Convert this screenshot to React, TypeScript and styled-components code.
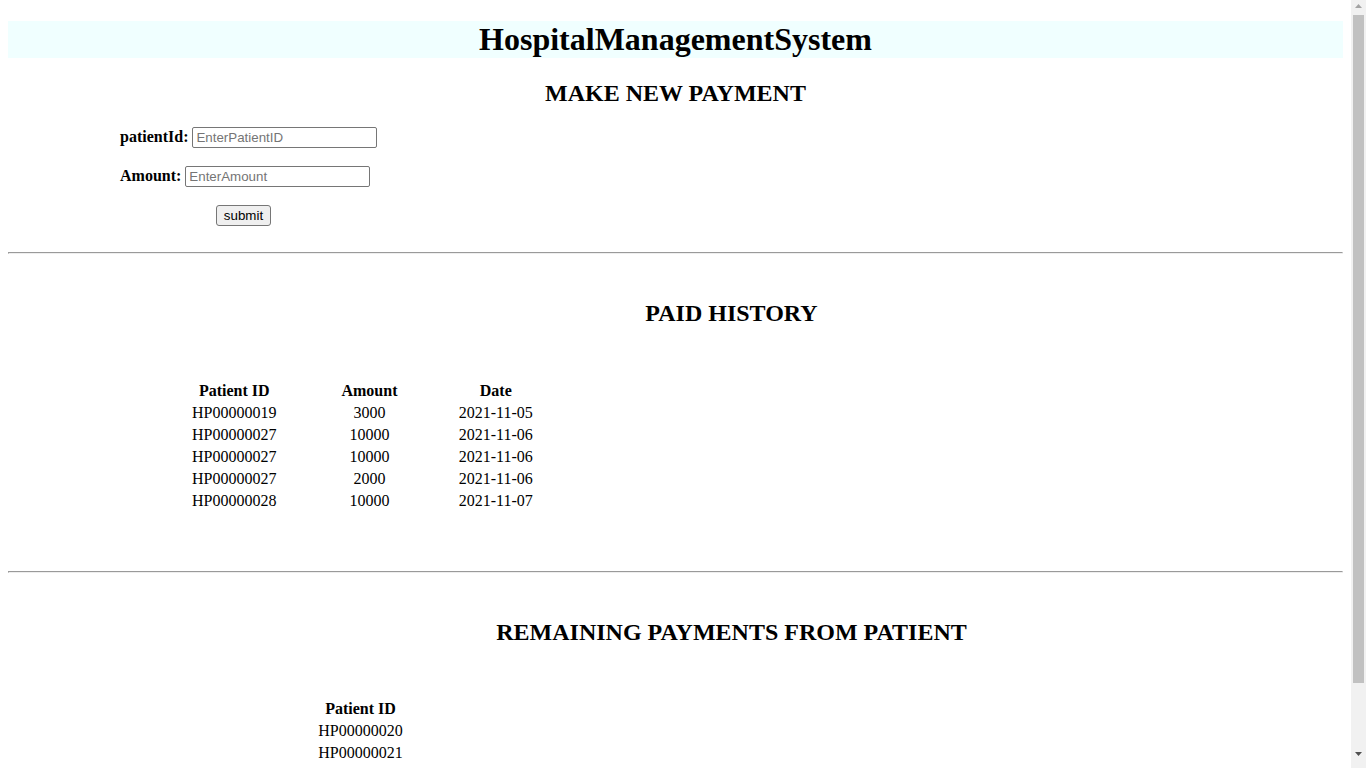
import React from "react";
import styled, { createGlobalStyle } from "styled-components";

const GlobalStyle = createGlobalStyle`
  html { background: #ffffff; }
  body {
    margin: 0 23px 8px 8px;
    font-family: "Liberation Serif", "Times New Roman", serif;
    font-size: 16px;
    color: #000000;
  }
`;

const Header = styled.h1`
  margin: 21.44px 0;
  background: #f0ffff;
  text-align: center;
  font-size: 32px;
  font-weight: bold;
`;

const Title = styled.h2`
  margin: 19.92px 0;
  text-align: center;
  font-size: 24px;
  font-weight: bold;
`;

const PaymentForm = styled.form`
  display: flex;
  flex-direction: column;
  gap: 18px;
  width: 247px;
  margin: 20px 0 26px 112px;
`;

const FieldRow = styled.div<{ $center?: boolean }>`
  display: flex;
  align-items: center;
  justify-content: ${(p) => (p.$center ? "center" : "flex-start")};
  gap: 4px;
  height: 21px;
`;

const Label = styled.label`
  font-weight: bold;
  font-size: 16px;
  white-space: nowrap;
`;

const TextInput = styled.input`
  box-sizing: border-box;
  width: 185px;
  height: 21px;
  padding: 1px 3px;
  border: 1px solid #767676;
  border-radius: 2px;
  font-family: "Liberation Sans", Arial, sans-serif;
  font-size: 13.333px;
  background: #ffffff;
  &::placeholder {
    color: #757575;
  }
`;

const SubmitButton = styled.button`
  box-sizing: border-box;
  width: 55px;
  height: 21px;
  padding: 1px 6px;
  border: 1px solid #767676;
  border-radius: 3px;
  background: #efefef;
  font-family: "Liberation Sans", Arial, sans-serif;
  font-size: 13.333px;
  color: #000000;
`;

const Divider = styled.hr`
  margin: 8px 0;
`;

const Section = styled.section`
  margin-left: 112px;
`;

const SectionTitle = styled.h2`
  margin: 46px 0 0;
  text-align: center;
  font-size: 24px;
  font-weight: bold;
`;

const DataTable = styled.table<{ $top?: number }>`
  table-layout: fixed;
  width: 416px;
  margin: ${(p) => p.$top ?? 52}px 0 58px 32.5px;
  border-spacing: 2px;
`;

const Col = styled.col<{ $w: number }>`
  width: ${(p) => p.$w}px;
`;

const HeadCell = styled.th`
  padding: 1px;
  font-weight: bold;
  text-align: center;
`;

const Cell = styled.td`
  padding: 1px;
  text-align: center;
`;

/* Classic browser scrollbar drawn over the right edge, as in the reference */
const ScrollTrack = styled.div`
  position: fixed;
  top: 0;
  right: 0;
  width: 15px;
  height: 100vh;
  background: #f1f1f1;
`;

const ScrollThumb = styled.div`
  position: absolute;
  top: 15px;
  left: 2px;
  width: 11px;
  height: 668px;
  background: #c1c1c1;
`;

const ArrowUp = styled.svg`
  position: absolute;
  top: 4px;
  left: 4px;
`;

const ArrowDown = styled.svg`
  position: absolute;
  bottom: 12px;
  left: 4px;
`;

const paid = [
  { id: "HP00000019", amount: "3000", date: "2021-11-05" },
  { id: "HP00000027", amount: "10000", date: "2021-11-06" },
  { id: "HP00000027", amount: "10000", date: "2021-11-06" },
  { id: "HP00000027", amount: "2000", date: "2021-11-06" },
  { id: "HP00000028", amount: "10000", date: "2021-11-07" },
];

const remaining = ["HP00000020", "HP00000021", "HP00000022"];

export default function App() {
  return (
    <>
      <GlobalStyle />
      <Header>HospitalManagementSystem</Header>
      <Title>MAKE NEW PAYMENT</Title>
      <PaymentForm onSubmit={(e) => e.preventDefault()}>
        <FieldRow>
          <Label htmlFor="pid">patientId:</Label>
          <TextInput id="pid" type="text" placeholder="EnterPatientID" />
        </FieldRow>
        <FieldRow>
          <Label htmlFor="amt">Amount:</Label>
          <TextInput id="amt" type="text" placeholder="EnterAmount" />
        </FieldRow>
        <FieldRow $center>
          <SubmitButton type="submit">submit</SubmitButton>
        </FieldRow>
      </PaymentForm>
      <Divider />
      <Section>
        <SectionTitle>PAID HISTORY</SectionTitle>
        <DataTable>
          <colgroup>
            <Col $w={159.5} />
            <Col $w={107} />
            <Col $w={141.5} />
          </colgroup>
          <thead>
            <tr>
              <HeadCell>Patient ID</HeadCell>
              <HeadCell>Amount</HeadCell>
              <HeadCell>Date</HeadCell>
            </tr>
          </thead>
          <tbody>
            {paid.map((r, i) => (
              <tr key={i}>
                <Cell>{r.id}</Cell>
                <Cell>{r.amount}</Cell>
                <Cell>{r.date}</Cell>
              </tr>
            ))}
          </tbody>
        </DataTable>
      </Section>
      <Divider />
      <Section>
        <SectionTitle>REMAINING PAYMENTS FROM PATIENT</SectionTitle>
        <DataTable $top={51}>
          <thead>
            <tr>
              <HeadCell>Patient ID</HeadCell>
            </tr>
          </thead>
          <tbody>
            {remaining.map((id) => (
              <tr key={id}>
                <Cell>{id}</Cell>
              </tr>
            ))}
          </tbody>
        </DataTable>
      </Section>
      <ScrollTrack aria-hidden="true">
        <ArrowUp width="7" height="4" viewBox="0 0 7 4">
          <path d="M3.5 0 L7 4 L0 4 Z" fill="#a3a3a3" />
        </ArrowUp>
        <ScrollThumb />
        <ArrowDown width="7" height="4" viewBox="0 0 7 4">
          <path d="M0 0 L7 0 L3.5 4 Z" fill="#505050" />
        </ArrowDown>
      </ScrollTrack>
    </>
  );
}
